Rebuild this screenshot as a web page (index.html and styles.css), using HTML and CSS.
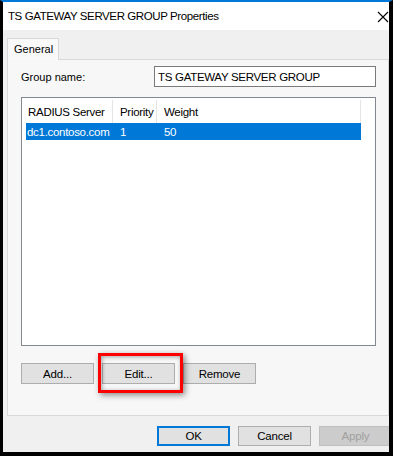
FILE: index.html
```html
<!DOCTYPE html>
<html lang="en">

<head>
    <meta charset="UTF-8">
    <title>TS GATEWAY SERVER GROUP Properties</title>
    <link rel="stylesheet" href="styles.css">
</head>

<body>
    <div class="window">
        <div class="titlebar">
            <span class="title">TS GATEWAY SERVER GROUP Properties</span>
            <svg class="close" width="12" height="12" viewBox="0 0 12 12">
                <path d="M1 1 L11 11 M11 1 L1 11" stroke="#000" stroke-width="1.1" fill="none" />
            </svg>
        </div>

        <div class="client">
            <div class="tabs">
                <div class="tab">General</div>
            </div>

            <div class="page">
                <div class="field">
                    <label class="field-label" for="groupName">Group name:</label>
                    <input id="groupName" class="textbox" type="text" value="TS GATEWAY SERVER GROUP">
                </div>

                <div class="listview">
                    <div class="list-head">
                        <div class="col col-server">RADIUS Server</div>
                        <div class="col col-priority">Priority</div>
                        <div class="col col-weight">Weight</div>
                    </div>
                    <div class="list-row selected">
                        <div class="cell col-server">dc1.contoso.com</div>
                        <div class="cell col-priority">1</div>
                        <div class="cell col-weight">50</div>
                    </div>
                </div>

                <div class="button-row">
                    <button class="btn">Add...</button>
                    <div class="highlight-wrap">
                        <button class="btn">Edit...</button>
                        <div class="highlight"></div> <!-- red annotation box -->
                    </div>
                    <button class="btn">Remove</button>
                </div>
            </div>

            <div class="dialog-buttons">
                <button class="btn btn-default">OK</button>
                <button class="btn">Cancel</button>
                <button class="btn" disabled>Apply</button>
            </div>
        </div>
    </div>
</body>

</html>
```

FILE: styles.css
```css
/* Reset */
* {
    margin: 0;
    padding: 0;
    box-sizing: border-box;
}

body {
    font-family: 'Liberation Sans', Arial, sans-serif;
    font-size: 11px;
    color: #000;
    background: #000;
}

/* Dialog frame */
.window {
    width: 393px;
    height: 456px;
    border-top: 2px solid #0078d7;
    border-left: 3px solid #000;
    border-right: 4px solid #000;
    border-bottom: 4px solid #000;
    background-color: #f0f0f0;
    overflow: hidden;
    display: flex;
    flex-direction: column;
}

.titlebar {
    height: 28px;
    background-color: #fff;
    display: flex;
    align-items: center;
    justify-content: space-between;
    padding: 0 0 0 5px;
    flex-shrink: 0;
}

.title {
    font-size: 11.5px;
    letter-spacing: -0.4px;
}

.close {
    margin-top: 1px;
}

.client {
    flex: 1;
    padding: 8px 0 0 4px;
    display: flex;
    flex-direction: column;
}

/* Tab strip */
.tabs {
    display: flex;
    height: 21px;
}

.tab {
    width: 52px;
    padding: 4px 0 0 6px;
    background-color: #f9f9f9;
    border: 1px solid #d9d9d9;
    border-bottom: none;
    position: relative;
    z-index: 1;
    height: 22px;
}

.page {
    width: 382px;
    height: 357px;
    background-color: #f7f7f7;
    border: 1px solid #d9d9d9;
    padding: 6px 12px 0 13px;
    display: flex;
    flex-direction: column;
}

/* Group name row */
.field {
    display: flex;
    align-items: center;
    justify-content: space-between;
    height: 21px;
}

.textbox {
    width: 222px;
    height: 21px;
    border: 1px solid #7a7a7a;
    background-color: #fff;
    font-family: inherit;
    font-size: 11.5px;
    padding: 0 0 0 3px;
    letter-spacing: -0.3px;
    color: #000;
}

/* Server list */
.listview {
    margin-top: 10px;
    height: 249px;
    border: 1px solid #828790;
    background-color: #fff;
    padding-left: 4px;
}

.list-head,
.list-row {
    display: grid;
    grid-template-columns: 87px 44px 204px;
    width: 335px;
}

.list-head {
    height: 25px;
    align-items: center;
}

.col {
    height: 23px;
    margin-top: 2px;
    display: flex;
    align-items: center;
    padding-left: 7px;
    border-right: 1px solid #e5e5e5;
    font-size: 11.5px;
    letter-spacing: -0.3px;
}

.col.col-server {
    padding-left: 2px;
}

.list-row {
    height: 17px;
    align-items: center;
    font-size: 11.5px;
    letter-spacing: -0.3px;
}

.cell {
    padding-left: 7px;
}

.cell.col-server {
    padding-left: 1px;
}

.list-row.selected {
    background-color: #0078d7;
    color: #fff;
}

/* Push buttons */
.button-row {
    display: flex;
    gap: 8px;
    margin-top: 17px;
}

.btn {
    width: 73px;
    height: 21px;
    background-color: #e1e1e1;
    border: 1px solid #adadad;
    font-family: inherit;
    font-size: 11.5px;
    color: #000;
    letter-spacing: -0.2px;
}

.btn:disabled {
    background-color: #cccccc;
    border-color: #bfbfbf;
    color: #a0a0a0;
}

.btn-default {
    border: 2px solid #0078d7;
}

.highlight-wrap {
    position: relative;
    display: flex;
}

/* Red annotation box drawn over the Edit button */
.highlight {
    position: absolute;
    left: -4px;
    top: -10px;
    width: 85px;
    height: 40px;
    border: 3px solid #f00;
    box-shadow: 2px 2px 6px rgba(0, 0, 0, 0.45), inset 1px 1px 4px rgba(0, 0, 0, 0.35);
}

/* OK / Cancel / Apply */
.dialog-buttons {
    display: flex;
    gap: 8px;
    margin: 10px 0 0 150px;
    width: 240px;
}

.dialog-buttons .btn {
    flex-shrink: 0;
    height: 20px;
}
```
